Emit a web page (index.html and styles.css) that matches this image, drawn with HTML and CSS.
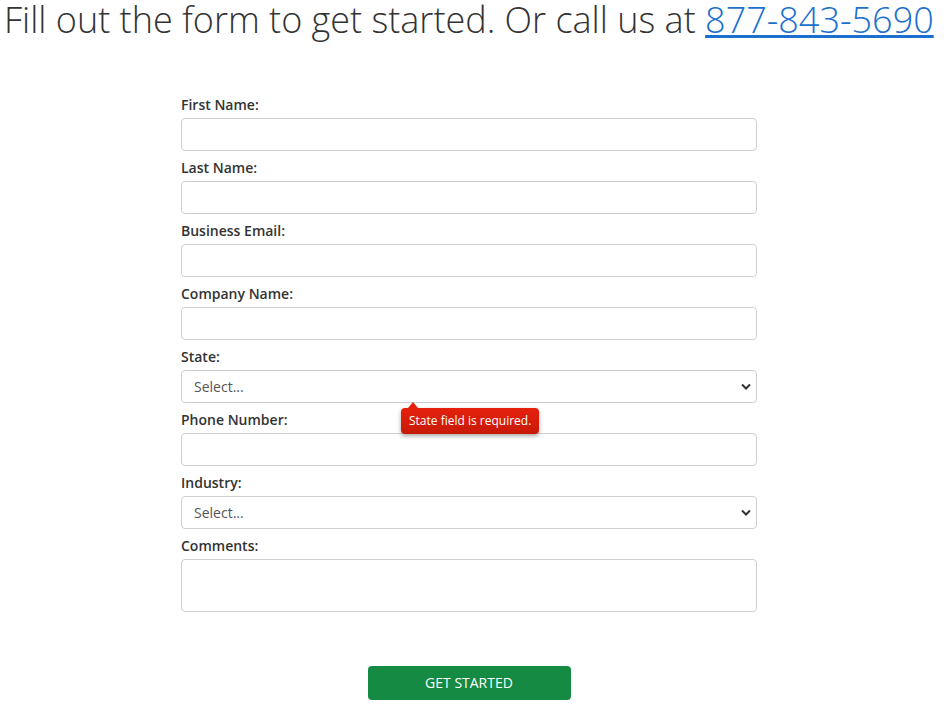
FILE: index.html
```html
<!DOCTYPE html>
<html lang="en">
<head>
  <meta charset="UTF-8">
  <title>Get Started</title>
  <link rel="stylesheet" href="styles.css">
</head>
<body>

  <h1 class="headline">Fill out the form to get started. Or call us at <a href="#">877-843-5690</a></h1>

  <form class="lead-form">
    <div class="field">
      <label>First Name:</label>
      <input type="text">
    </div>
    <div class="field">
      <label>Last Name:</label>
      <input type="text">
    </div>
    <div class="field">
      <label>Business Email:</label>
      <input type="email">
    </div>
    <div class="field">
      <label>Company Name:</label>
      <input type="text">
    </div>
    <div class="field">
      <label>State:</label>
      <div class="select-wrap">
        <select>
          <option>Select...</option>
        </select>
        <svg class="chevron" width="10" height="7" viewBox="0 0 10 7"><path d="M1 1.5 L5 5.5 L9 1.5" fill="none" stroke="#333" stroke-width="2"/></svg>
        <div class="tip">State field is required.</div>
      </div>
    </div>
    <div class="field">
      <label>Phone Number:</label>
      <input type="tel">
    </div>
    <div class="field">
      <label>Industry:</label>
      <div class="select-wrap">
        <select>
          <option>Select...</option>
        </select>
        <svg class="chevron" width="10" height="7" viewBox="0 0 10 7"><path d="M1 1.5 L5 5.5 L9 1.5" fill="none" stroke="#333" stroke-width="2"/></svg>
      </div>
    </div>
    <div class="field">
      <label>Comments:</label>
      <textarea></textarea>
    </div>
    <div class="actions">
      <button type="button">GET STARTED</button>
    </div>
  </form>

</body>
</html>
```

FILE: styles.css
```css
body {
  margin: 0;
  font-family: "Open Sans", Arial, sans-serif;
  background: #fff;
  color: #333;
}
.headline {
  margin: 0;
  padding-left: 4px;
  font-size: 36px;
  font-weight: 300;
  line-height: 40px;
  color: #333;
  white-space: nowrap;
}
.headline a {
  color: #1a6fcf;
}
.lead-form {
  width: 576px;
  margin: 55px 0 0 181px;
}
.field {
  margin-bottom: 7px;
}
.field label {
  display: block;
  font-size: 14px;
  font-weight: 600;
  line-height: 20px;
  margin-bottom: 3px;
  color: #333;
}
.field input, .field select, .field textarea {
  display: block;
  box-sizing: border-box;
  width: 100%;
  height: 33px;
  border: 1px solid #ccd0d5;
  border-radius: 4px;
  background: #fff;
  font-family: inherit;
  font-size: 14px;
  color: #555;
  padding: 0 12px;
  margin: 0;
}
.field textarea {
  height: 53px;
  resize: none;
}
.select-wrap {
  position: relative;
}
.field select {
  appearance: none;
  -webkit-appearance: none;
}
.chevron {
  position: absolute;
  right: 6px;
  top: 13px;
  pointer-events: none;
}
.tip {
  position: absolute;
  left: 220px;
  top: 38px;
  background: linear-gradient(#e5200c, #c71a08);
  color: #fff;
  font-size: 12px;
  line-height: 16px;
  padding: 5px 8px;
  border-radius: 4px;
  box-shadow: 0 2px 4px rgba(0, 0, 0, 0.35);
  white-space: nowrap;
}
.tip::before {
  content: "";
  position: absolute;
  left: 7px;
  top: -6px;
  border-left: 5px solid transparent;
  border-right: 5px solid transparent;
  border-bottom: 6px solid #e5200c;
}
.actions {
  text-align: center;
  margin-top: 54px;
}
.actions button {
  width: 203px;
  height: 34px;
  padding: 0 0 1px;
  background: #148a42;
  color: #fff;
  border: none;
  border-radius: 4px;
  font-family: inherit;
  font-size: 14px;
  cursor: pointer;
}
```
